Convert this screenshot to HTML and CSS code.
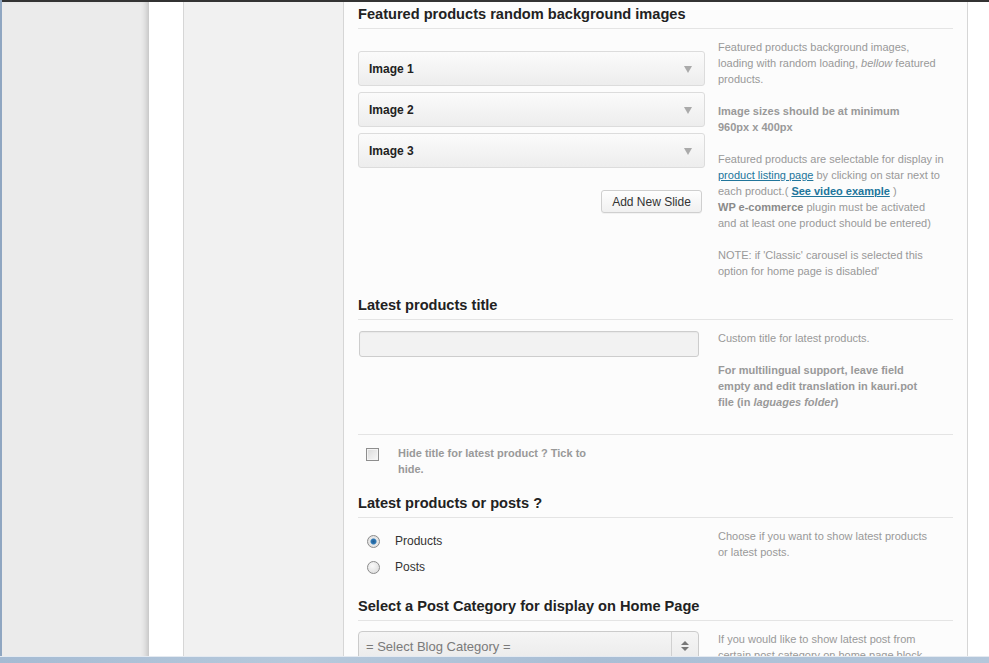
FILE: index.html
```html
<!DOCTYPE html>
<html lang="en">
<head>
<meta charset="utf-8">
<title>Theme options</title>
<link rel="stylesheet" href="styles.css">
</head>
<body>
<div class="window">
  <div class="topbar"></div>
  <div class="main">
    <aside class="sidebar"></aside>
    <div class="spacer"></div>
    <nav class="nav"></nav>
    <div class="content">

      <section class="section first">
        <h3 class="sec-title">Featured products random background images</h3>
        <div class="row">
          <div class="field">
            <div class="slides">
              <div class="slide"><span>Image 1</span><i class="tri"></i></div>
              <div class="slide"><span>Image 2</span><i class="tri"></i></div>
              <div class="slide"><span>Image 3</span><i class="tri"></i></div>
            </div>
            <div class="btn-row"><button class="btn" type="button">Add New Slide</button></div>
          </div>
          <div class="desc">
            <p>Featured products background images,<br>loading with random loading, <em>bellow</em> featured<br>products.</p>
            <p><strong>Image sizes should be at minimum<br>960px x 400px</strong></p>
            <p>Featured products are selectable for display in<br><a href="#" class="lnk">product listing page</a> by clicking on star next to<br>each product.( <a href="#" class="lnk strong">See video example</a> )<br><strong class="dark">WP e-commerce</strong> plugin must be activated<br>and at least one product should be entered)</p>
            <p>NOTE: if 'Classic' carousel is selected this<br>option for home page is disabled'</p>
          </div>
        </div>
      </section>

      <section class="section">
        <h3 class="sec-title">Latest products title</h3>
        <div class="row pad-bottom">
          <div class="field">
            <input class="text-input" type="text" value="">
          </div>
          <div class="desc">
            <p>Custom title for latest products.</p>
            <p><strong>For multilingual support, leave field<br>empty and edit translation in kauri.pot<br>file (in <em>laguages folder</em>)</strong></p>
          </div>
        </div>
        <div class="check-row">
          <span class="checkbox"></span>
          <span class="check-label">Hide title for latest product ? Tick to<br>hide.</span>
        </div>
      </section>

      <section class="section">
        <h3 class="sec-title">Latest products or posts ?</h3>
        <div class="row">
          <div class="field">
            <div class="radio-item"><span class="radio checked"></span><span class="radio-label">Products</span></div>
            <div class="radio-item"><span class="radio"></span><span class="radio-label">Posts</span></div>
          </div>
          <div class="desc">
            <p>Choose if you want to show latest products<br>or latest posts.</p>
          </div>
        </div>
      </section>

      <section class="section">
        <h3 class="sec-title">Select a Post Category for display on Home Page</h3>
        <div class="row">
          <div class="field">
            <div class="select">
              <span class="select-text">= Select Blog Category =</span>
              <span class="select-arrows"><i class="up"></i><i class="down"></i></span>
            </div>
          </div>
          <div class="desc">
            <p>If you would like to show latest post from<br>certain post category on home page block</p>
          </div>
        </div>
      </section>

    </div>
    <div class="outer"></div>
  </div>
</div>
<div class="taskbar"></div>
</body>
</html>
```

FILE: styles.css
```css
html, body {
  margin: 0;
  padding: 0;
  width: 989px;
  height: 663px;
  overflow: hidden;
  background: #8fa6c1;
  font-family: "Liberation Sans", Arial, sans-serif;
}

.window {
  margin-left: 2px;
  height: 663px;
  display: flex;
  flex-direction: column;
  background: #fff;
}

.topbar {
  height: 2px;
  background: #333;
  flex: none;
}

.main {
  flex: 1;
  display: flex;
  min-height: 0;
}

.sidebar {
  width: 147px;
  flex: none;
  background: #ebebeb;
  box-shadow: inset -6px 0 6px -4px rgba(0, 0, 0, 0.2);
}

.spacer {
  width: 34px;
  flex: none;
  background: #fff;
}

.nav {
  width: 159px;
  flex: none;
  background: #f1f1f1;
  border-left: 1px solid #d6d6d6;
  border-right: 1px solid #d6d6d6;
}

.content {
  width: 595px;
  flex: none;
  padding: 0 14px;
  background: #fcfcfc;
  border-right: 1px solid #d6d6d6;
}

.outer {
  flex: 1;
  background: #fff;
}

/* sections */
.section {
  padding-top: 17px;
}

.section.first {
  padding-top: 3px;
}

.sec-title {
  margin: 0;
  padding-bottom: 5px;
  font-size: 14.6px;
  line-height: 18px;
  font-weight: bold;
  color: #222;
  border-bottom: 1px solid #e4e4e4;
  text-shadow: 0 1px 0 #fff;
}

.row {
  display: flex;
  gap: 13px;
  padding-top: 10px;
}

.row.pad-bottom {
  padding-bottom: 24px;
}

.field {
  width: 347px;
  flex: none;
}

.desc {
  width: 234px;
  flex: none;
  font-size: 11px;
  line-height: 16px;
  color: #999;
}

.desc p {
  margin: 0 0 16px;
}

.desc p:last-child {
  margin-bottom: 0;
}

.desc strong {
  font-weight: bold;
}

.desc .dark {
  color: #8a8a8a;
}

.lnk {
  color: #21759b;
  text-decoration: underline;
}

.lnk.strong {
  font-weight: bold;
}

/* slides */
.slides {
  margin-top: 12px;
}

.slide {
  height: 33px;
  margin-bottom: 6px;
  border: 1px solid #dcdcdc;
  border-radius: 3px;
  background: linear-gradient(#fbfbfb, #ededed);
  display: flex;
  align-items: center;
  justify-content: space-between;
  padding: 0 12px 0 10px;
  box-sizing: content-box;
  font-size: 12px;
  font-weight: bold;
  color: #222;
}

.slide:last-child {
  margin-bottom: 0;
}

.tri {
  width: 0;
  height: 0;
  border-left: 4px solid transparent;
  border-right: 4px solid transparent;
  border-top: 7px solid #aaa;
  margin-top: 1px;
}

.btn-row {
  display: flex;
  justify-content: flex-end;
  margin-top: 22px;
  padding-right: 3px;
}

.btn {
  height: 23px;
  width: 101px;
  padding: 0;
  border: 1px solid #cfcfcf;
  border-radius: 3px;
  background: linear-gradient(#fefefe, #f0f0f0);
  font-family: "Liberation Sans", Arial, sans-serif;
  font-size: 12px;
  color: #333;
  box-shadow: 0 1px 0 rgba(0, 0, 0, 0.04);
}

/* input */
.text-input {
  display: block;
  margin: 1px 0 0 1px;
  width: 340px;
  height: 26px;
  box-sizing: border-box;
  border: 1px solid #cdcdcd;
  border-radius: 3px;
  background: #f2f2f2;
  box-shadow: inset 0 1px 1px rgba(0, 0, 0, 0.04);
  padding: 0 6px;
}

/* checkbox */
.check-row {
  display: flex;
  align-items: flex-start;
  border-top: 1px solid #e4e4e4;
  padding-top: 10px;
}

.checkbox {
  width: 11px;
  height: 11px;
  margin: 3px 0 0 8px;
  border: 1px solid #8e8e8e;
  background: linear-gradient(135deg, #dadada, #f8f8f8);
  box-shadow: inset 0 0 0 1px #f4f4f4;
  flex: none;
}

.check-label {
  margin-left: 19px;
  font-size: 11px;
  line-height: 16px;
  font-weight: bold;
  color: #999;
}

/* radio */
.radio-item {
  height: 26px;
  display: flex;
  align-items: center;
}

.radio {
  width: 11px;
  height: 11px;
  margin-left: 9px;
  border: 1px solid #8b8b8b;
  border-radius: 50%;
  background: radial-gradient(circle at 40% 35%, #fafafa, #d8d8d8);
  flex: none;
  position: relative;
}

.radio.checked {
  background: radial-gradient(circle at 50% 50%, #1f5c92 0, #2f7ab8 2.5px, #e8e8e8 3.5px, #dcdcdc 100%);
}

.radio-label {
  margin-left: 15px;
  font-size: 12px;
  color: #333;
}

/* select */
.select {
  width: 339px;
  height: 28px;
  border: 1px solid #cbcbcb;
  border-radius: 4px;
  background: linear-gradient(#f5f5f5, #ebebeb);
  display: flex;
  align-items: center;
  justify-content: space-between;
}

.select-text {
  padding-left: 7px;
  font-size: 13px;
  color: #7a7a7a;
}

.select-arrows {
  width: 26px;
  height: 28px;
  border-left: 1px solid #d0d0d0;
  display: flex;
  flex-direction: column;
  align-items: center;
  justify-content: center;
  gap: 2px;
}

.select-arrows .up {
  width: 0;
  height: 0;
  border-left: 4px solid transparent;
  border-right: 4px solid transparent;
  border-bottom: 4px solid #777;
}

.select-arrows .down {
  width: 0;
  height: 0;
  border-left: 4px solid transparent;
  border-right: 4px solid transparent;
  border-top: 4px solid #777;
}

/* taskbar overlay */
.taskbar {
  position: fixed;
  left: 0;
  right: 0;
  bottom: 0;
  height: 6px;
  border-top: 1px solid #e4eaf1;
  background: linear-gradient(90deg, #a5bbd3, #b6c9dc 30%, #a9bed5 60%, #b4c7db);
}
```
